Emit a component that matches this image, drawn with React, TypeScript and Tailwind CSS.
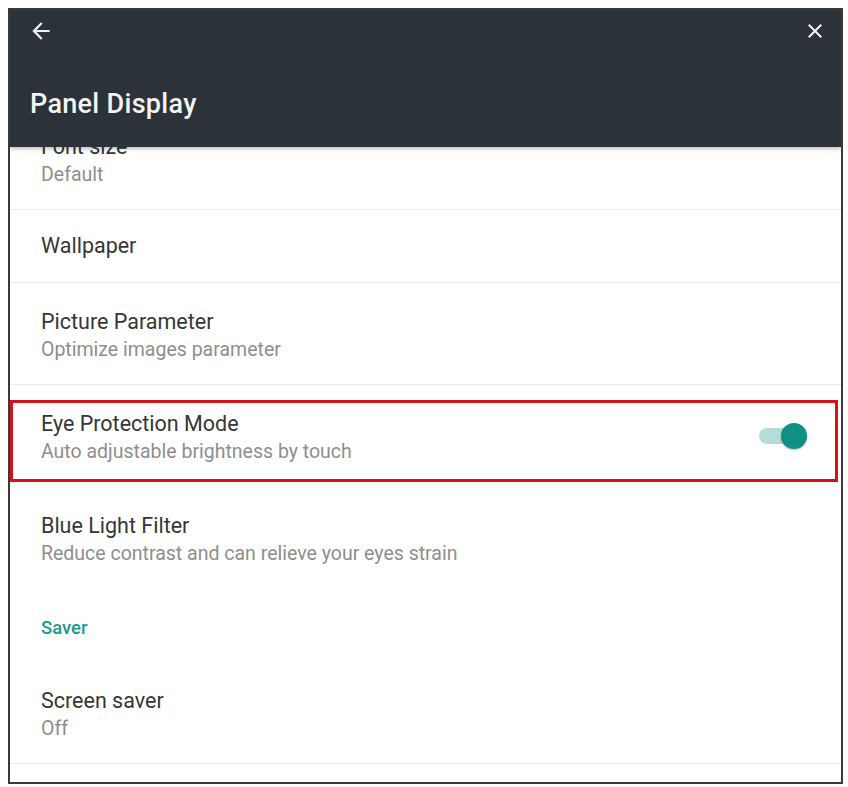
const FONT = "font-['Roboto','Liberation_Sans',sans-serif]";

function TwoLineRow({ title, subtitle, divider = true }: { title: string; subtitle: string; divider?: boolean }) {
  return (
    <div className={`h-[102px] pl-[31px] pt-[26px] ${divider ? "border-b border-[#ececec]" : ""}`}>
      <div className="text-[21.5px] leading-[26px] text-[#363636]">{title}</div>
      <div className="mt-[3px] text-[19.5px] leading-[24px] text-[#8e8e8e]">{subtitle}</div>
    </div>
  );
}

export default function App() {
  return (
    <div className={`w-[848px] h-[787px] bg-white pt-[8px] pl-[8px] ${FONT}`}>
      <div className="w-[835px] h-[776px] border-2 border-[#3a3a3a] flex flex-col overflow-hidden bg-white">
        {/* Header */}
        <div className="relative z-10 h-[137px] shrink-0 bg-[#2b3238] shadow-[0_2px_4px_rgba(0,0,0,0.25)]">
          <div className="h-[42px] flex items-center justify-between pl-[18px] pr-[14px]">
            <svg width="26" height="26" viewBox="0 0 24 24" fill="#f2f2f2">
              <path d="M20 11H7.83l5.59-5.59L12 4l-8 8 8 8 1.41-1.41L7.83 13H20v-2z" />
            </svg>
            <svg width="24" height="24" viewBox="0 0 24 24" fill="#f2f2f2">
              <path d="M19 6.41L17.59 5 12 10.59 6.41 5 5 6.41 10.59 12 5 17.59 6.41 19 12 13.41 17.59 19 19 17.59 13.41 12z" />
            </svg>
          </div>
          <div className="mt-[36px] pl-[20px] text-[27px] leading-[32px] tracking-[0.3px] font-medium text-[#f4f4f4]">Panel Display</div>
        </div>

        {/* List */}
        <div className="flex-1 overflow-hidden">
          <div className="-mt-[39px]">
            <TwoLineRow title="Font size" subtitle="Default" />
            <div className="h-[73px] pl-[31px] flex items-center border-b border-[#ececec]">
              <span className="text-[21.5px] leading-[26px] text-[#363636]">Wallpaper</span>
            </div>
            <TwoLineRow title="Picture Parameter" subtitle="Optimize images parameter" />

            <div className="relative h-[102px] flex items-center justify-between pr-[34px]">
              <div className="pl-[31px] pt-[3px]">
                <div className="text-[21.5px] leading-[26px] text-[#363636]">Eye Protection Mode</div>
                <div className="mt-[3px] text-[19.5px] leading-[24px] text-[#8e8e8e]">Auto adjustable brightness by touch</div>
              </div>
              <div className="relative w-[48px] h-[26px]">
                <div className="absolute left-0 top-[5px] w-[36px] h-[16px] rounded-full bg-[#b4ddd7]" />
                <div className="absolute right-0 top-0 w-[26px] h-[26px] rounded-full bg-[#0e9182] shadow-[0_1px_2px_rgba(0,0,0,0.3)]" />
              </div>
              <div className="absolute left-0 right-[3px] top-[15px] bottom-[5px] border-[3px] border-[#d3121c]" />
            </div>

            <TwoLineRow title="Blue Light Filter" subtitle="Reduce contrast and can relieve your eyes strain" divider={false} />
            <div className="h-[73px] pl-[31px] pt-[27px]">
              <div className="text-[18.5px] leading-[24px] font-medium text-[#1d9a8a]">Saver</div>
            </div>
            <TwoLineRow title="Screen saver" subtitle="Off" />
          </div>
        </div>
      </div>
    </div>
  );
}
